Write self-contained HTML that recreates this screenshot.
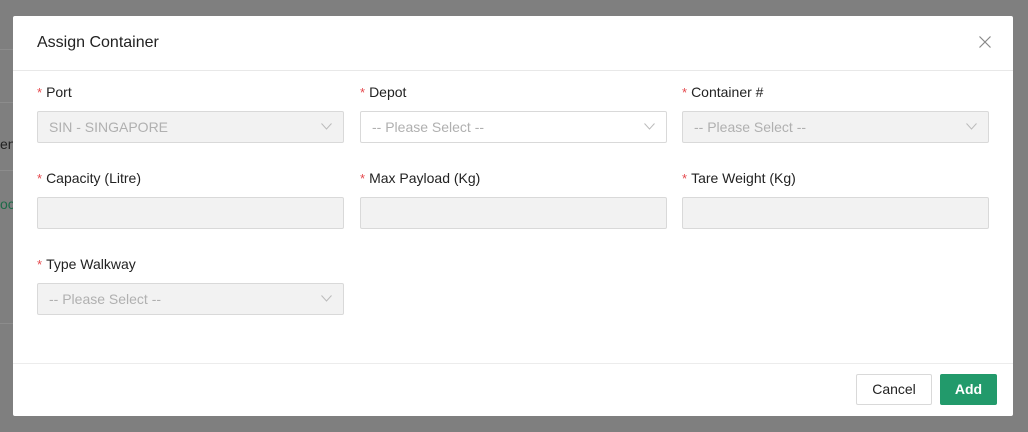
<!DOCTYPE html>
<html><head><style>
body{margin:0;width:1028px;height:432px;background:#7f7f7f;font-family:"Liberation Sans",sans-serif;position:relative;overflow:hidden}
.bgl{position:absolute;left:0;width:13px;height:1px;background:#8c8c8c}
.modal{position:absolute;left:13px;top:16px;width:1000px;height:400px;background:#fff;border-radius:2px}
.hd{height:54px;border-bottom:1px solid #e8e8e8;position:relative}
.hd .t{position:absolute;left:24px;top:18px;font-size:16px;color:#222}
.x{position:absolute;right:22px;top:20px;width:12px;height:12px}
.f{position:absolute;width:307px}
.lab{font-size:14px;color:#222;height:20px}
.lab b{color:#e5484d;font-weight:normal;margin-right:4px;font-size:13px}
.in{position:absolute;top:27px;left:0;width:305px;height:30px;border:1px solid #d9d9d9;background:#f2f2f2;border-radius:2px;font-size:14px;color:#b0b0b0;line-height:30px;text-indent:11px}
.in.w{background:#fff}
.in svg{position:absolute;right:11px;top:11px}
.ft{position:absolute;left:0;right:0;top:347px;border-top:1px solid #ececec}
.btn{position:absolute;top:358px;height:31px;border-radius:2px;font-size:14px;line-height:31px;text-align:center}
</style></head><body>
<div class="bgl" style="top:49px"></div><div class="bgl" style="top:102px"></div><div class="bgl" style="top:170px"></div><div class="bgl" style="top:323px"></div>
<div style="position:absolute;left:0;top:136px;font-size:14px;color:#222">en</div>
<div style="position:absolute;left:0;top:196px;font-size:14px;color:#1d6b48">oc</div>
<div class="modal">
<div class="hd"><div class="t">Assign Container</div>
<svg class="x" viewBox="0 0 12 12"><path d="M.5 .5L11.5 11.5M11.5 .5L.5 11.5" stroke="#888" stroke-width="1.2"/></svg></div>
<div class="f" style="left:24px;top:68px"><div class="lab"><b>*</b>Port</div><div class="in">SIN - SINGAPORE<svg width="11" height="7" viewBox="0 0 11 7"><path d="M.5 .5L5.5 6L10.5 .5" fill="none" stroke="#bbb"/></svg></div></div>
<div class="f" style="left:347px;top:68px"><div class="lab"><b>*</b>Depot</div><div class="in w">-- Please Select --<svg width="11" height="7" viewBox="0 0 11 7"><path d="M.5 .5L5.5 6L10.5 .5" fill="none" stroke="#bbb"/></svg></div></div>
<div class="f" style="left:669px;top:68px"><div class="lab"><b>*</b>Container #</div><div class="in">-- Please Select --<svg width="11" height="7" viewBox="0 0 11 7"><path d="M.5 .5L5.5 6L10.5 .5" fill="none" stroke="#bbb"/></svg></div></div>
<div class="f" style="left:24px;top:154px"><div class="lab"><b>*</b>Capacity (Litre)</div><div class="in"></div></div>
<div class="f" style="left:347px;top:154px"><div class="lab"><b>*</b>Max Payload (Kg)</div><div class="in"></div></div>
<div class="f" style="left:669px;top:154px"><div class="lab"><b>*</b>Tare Weight (Kg)</div><div class="in"></div></div>
<div class="f" style="left:24px;top:240px"><div class="lab"><b>*</b>Type Walkway</div><div class="in">-- Please Select --<svg width="11" height="7" viewBox="0 0 11 7"><path d="M.5 .5L5.5 6L10.5 .5" fill="none" stroke="#bbb"/></svg></div></div>
<div class="ft"></div>
<div class="btn" style="left:843px;width:74px;border:1px solid #d9d9d9;color:#222;height:29px;line-height:29px">Cancel</div>
<div class="btn" style="left:927px;width:57px;background:#229a6b;color:#fff;font-weight:bold">Add</div>
</div>
</body></html>
